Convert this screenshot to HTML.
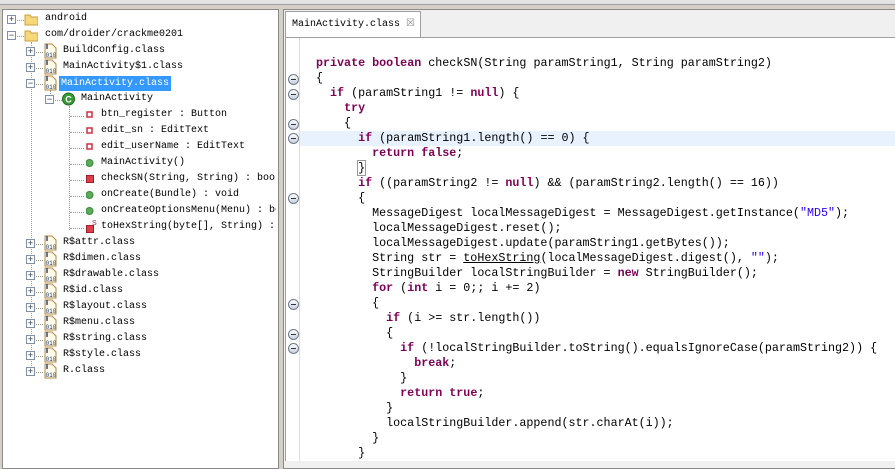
<!DOCTYPE html>
<html><head><meta charset="utf-8">
<style>
*{margin:0;padding:0;box-sizing:border-box}
body{width:895px;height:461px;background:#d4d0c8;position:relative;overflow:hidden;font-family:"Liberation Mono",monospace}
#top{position:absolute;left:0;top:0;width:895px;height:5px;background:#e3e3e3;border-bottom:1px solid #a0a0a0}
#left{position:absolute;left:2px;top:9px;width:277px;height:460px;background:#fff;border:1px solid #8a8a8a}
#right{position:absolute;left:283px;top:9px;width:620px;height:460px;background:#f0f0f0;border:1px solid #8a8a8a}
.r{position:absolute;height:16px;font-size:10px;line-height:16px;color:#000;white-space:nowrap}
.ex{position:absolute;width:9px;height:9px;border:1px solid #7f8fa8;background:#fff;font-size:9px;line-height:7px;text-align:center;color:#203060;font-family:"Liberation Sans",sans-serif}
.ci{position:absolute;width:14px;height:16px}
.dh{position:absolute;border-top:1px dotted #999;height:0}
.dv{position:absolute;border-left:1px dotted #999;width:0}
#tab{position:absolute;left:285px;top:11px;width:136px;height:26px;background:#fff;border:1px solid #a0a0a0;border-bottom:none;font-size:10px;line-height:24px;padding-left:6px}
#ed{position:absolute;left:285px;top:37px;width:610px;height:424px;background:#fff;border-top:1px solid #a0a0a0;border-left:1px solid #a0a0a0}
#ruler{position:absolute;left:299px;top:38px;width:1px;height:423px;background:#dcdcdc}
#hl{position:absolute;left:300px;top:131px;width:595px;height:15px;background:#e8f2fe}
#code{position:absolute;left:316px;top:56px;font-size:11.7px;line-height:15px;white-space:pre;color:#000}
.k{color:#7f0055;font-weight:bold}
.s{color:#2a00ff}
.fm{position:absolute;left:288px;width:11px;height:11px;border-radius:50%;border:1px solid #6d7b8d;background:linear-gradient(#fff,#c8d0dc)}
.fm:after{content:"";position:absolute;left:2px;top:4px;width:5px;height:1px;background:#333}
</style></head><body>
<div id="top"></div>
<div id="left"></div>
<div id="right"></div>

<div class="dv" style="left:31px;top:42px;height:330px"></div>
<div class="dv" style="left:50px;top:90px;height:12px"></div>
<div class="dv" style="left:69px;top:106px;height:124px"></div>

<div id="tree"></div>
<script>
var rows=[
[0,'+','folder','android'],
[0,'-','ofolder','com/droider/crackme0201'],
[1,'+','cls','BuildConfig.class'],
[1,'+','cls','MainActivity$1.class'],
[1,'-','cls','MainActivity.class',1],
[2,'-','C','MainActivity'],
[3,'','f','btn_register : Button'],
[3,'','f','edit_sn : EditText'],
[3,'','f','edit_userName : EditText'],
[3,'','m','MainActivity()'],
[3,'','pm','checkSN(String, String) : boolean'],
[3,'','m','onCreate(Bundle) : void'],
[3,'','m','onCreateOptionsMenu(Menu) : boolean'],
[3,'','sm','toHexString(byte[], String) : String'],
[1,'+','cls','R$attr.class'],
[1,'+','cls','R$dimen.class'],
[1,'+','cls','R$drawable.class'],
[1,'+','cls','R$id.class'],
[1,'+','cls','R$layout.class'],
[1,'+','cls','R$menu.class'],
[1,'+','cls','R$string.class'],
[1,'+','cls','R$style.class'],
[1,'+','cls','R.class']];
var exX=[7,26,45,0],icX=[24,43,62,86],txX=[45,63,81,101];
var h='';
rows.forEach(function(r,i){
 var y=11+i*16,l=r[0];
 if(r[1]){h+='<div class="ex" style="left:'+exX[l]+'px;top:'+(y+4)+'px">'+(r[1]=='+'?'+':'&minus;')+'</div>';
  h+='<div class="dh" style="left:'+(exX[l]+10)+'px;top:'+(y+9)+'px;width:'+(icX[l]-exX[l]-10)+'px"></div>';}
 else h+='<div class="dh" style="left:70px;top:'+(y+9)+'px;width:14px"></div>';
 var ic='',t=y;
 if(r[2]=='folder'||r[2]=='ofolder')ic='<svg class="ci" style="left:'+icX[l]+'px;top:'+t+'px" width="15" height="16"><path d="M1 4h5l1 2h7v8H1z" fill="#f6d77a" stroke="#c9a040"/></svg>';
 else if(r[2]=='cls')ic='<svg class="ci" style="left:'+icX[l]+'px;top:'+t+'px" width="15" height="16"><path d="M2 1h7l4 4v10H2z" fill="#fffbe8" stroke="#b08a40"/><path d="M4 1v5" stroke="#2a4a8a" stroke-width="1.5"/><text x="2.5" y="14" font-size="6" font-family="Liberation Mono" fill="#1a3a7a">010</text></svg>';
 else if(r[2]=='C')ic='<svg class="ci" style="left:'+icX[l]+'px;top:'+t+'px" width="14" height="16"><circle cx="6.5" cy="8" r="6" fill="#3a9a3a" stroke="#1f6a1f"/><text x="3.3" y="11.5" font-size="9" font-weight="bold" font-family="Liberation Sans" fill="#fff">C</text></svg>';
 else if(r[2]=='f')ic='<svg class="ci" style="left:'+icX[l]+'px;top:'+t+'px" width="14" height="16"><rect x="1" y="5" width="5" height="5" fill="#fff" stroke="#d0303a" stroke-width="1.5"/></svg>';
 else if(r[2]=='m')ic='<svg class="ci" style="left:'+icX[l]+'px;top:'+t+'px" width="14" height="16"><circle cx="3.5" cy="8" r="3.5" fill="#5aab5a" stroke="#3a8a3a"/></svg>';
 else if(r[2]=='pm')ic='<svg class="ci" style="left:'+icX[l]+'px;top:'+t+'px" width="14" height="16"><rect x="0.5" y="4.5" width="7" height="7" fill="#d8404a" stroke="#a02030"/></svg>';
 else ic='<svg class="ci" style="left:'+icX[l]+'px;top:'+t+'px" width="14" height="16"><rect x="0.5" y="6.5" width="7" height="7" fill="#d8404a" stroke="#a02030"/><text x="6" y="6" font-size="7" font-family="Liberation Sans" fill="#c02030">S</text></svg>';
 h+=ic;
 var sel=r[4]?'background:#3399ff;color:#fff;padding:0 2px;height:15px;top:'+(y+1)+'px;line-height:15px;':'top:'+y+'px;';
 h+='<div class="r" style="left:'+(txX[l]-(r[4]?4:0))+'px;'+sel+'max-width:'+(276-txX[l])+'px;overflow:hidden">'+r[3].replace(/&/g,'&amp;')+'</div>';
});
document.getElementById('tree').innerHTML=h;
</script>

<div id="tab">MainActivity.class <span style="color:#888;font-family:'DejaVu Sans';font-size:10px">&#x2612;</span></div>
<div id="ed"></div>
<div id="ruler"></div>
<div id="hl"></div>
<div class="fm" style="top:74px"></div>
<div class="fm" style="top:89px"></div>
<div class="fm" style="top:119px"></div>
<div class="fm" style="top:133px"></div>
<div class="fm" style="top:193px"></div>
<div class="fm" style="top:299px"></div>
<div class="fm" style="top:329px"></div>
<div class="fm" style="top:343px"></div>
<div id="code"><span class="k">private</span> <span class="k">boolean</span> checkSN(String paramString1, String paramString2)
{
  <span class="k">if</span> (paramString1 != <span class="k">null</span>) {
    <span class="k">try</span>
    {
      <span class="k">if</span> (paramString1.length() == 0) {
        <span class="k">return</span> <span class="k">false</span>;
      <span style="outline:1px solid #999">}</span>
      <span class="k">if</span> ((paramString2 != <span class="k">null</span>) &amp;&amp; (paramString2.length() == 16))
      {
        MessageDigest localMessageDigest = MessageDigest.getInstance(<span class="s">"MD5"</span>);
        localMessageDigest.reset();
        localMessageDigest.update(paramString1.getBytes());
        String str = <u>toHexString</u>(localMessageDigest.digest(), <span class="s">""</span>);
        StringBuilder localStringBuilder = <span class="k">new</span> StringBuilder();
        <span class="k">for</span> (<span class="k">int</span> i = 0;; i += 2)
        {
          <span class="k">if</span> (i &gt;= str.length())
          {
            <span class="k">if</span> (!localStringBuilder.toString().equalsIgnoreCase(paramString2)) {
              <span class="k">break</span>;
            }
            <span class="k">return</span> <span class="k">true</span>;
          }
          localStringBuilder.append(str.charAt(i));
        }
      }</div>
</body></html>
